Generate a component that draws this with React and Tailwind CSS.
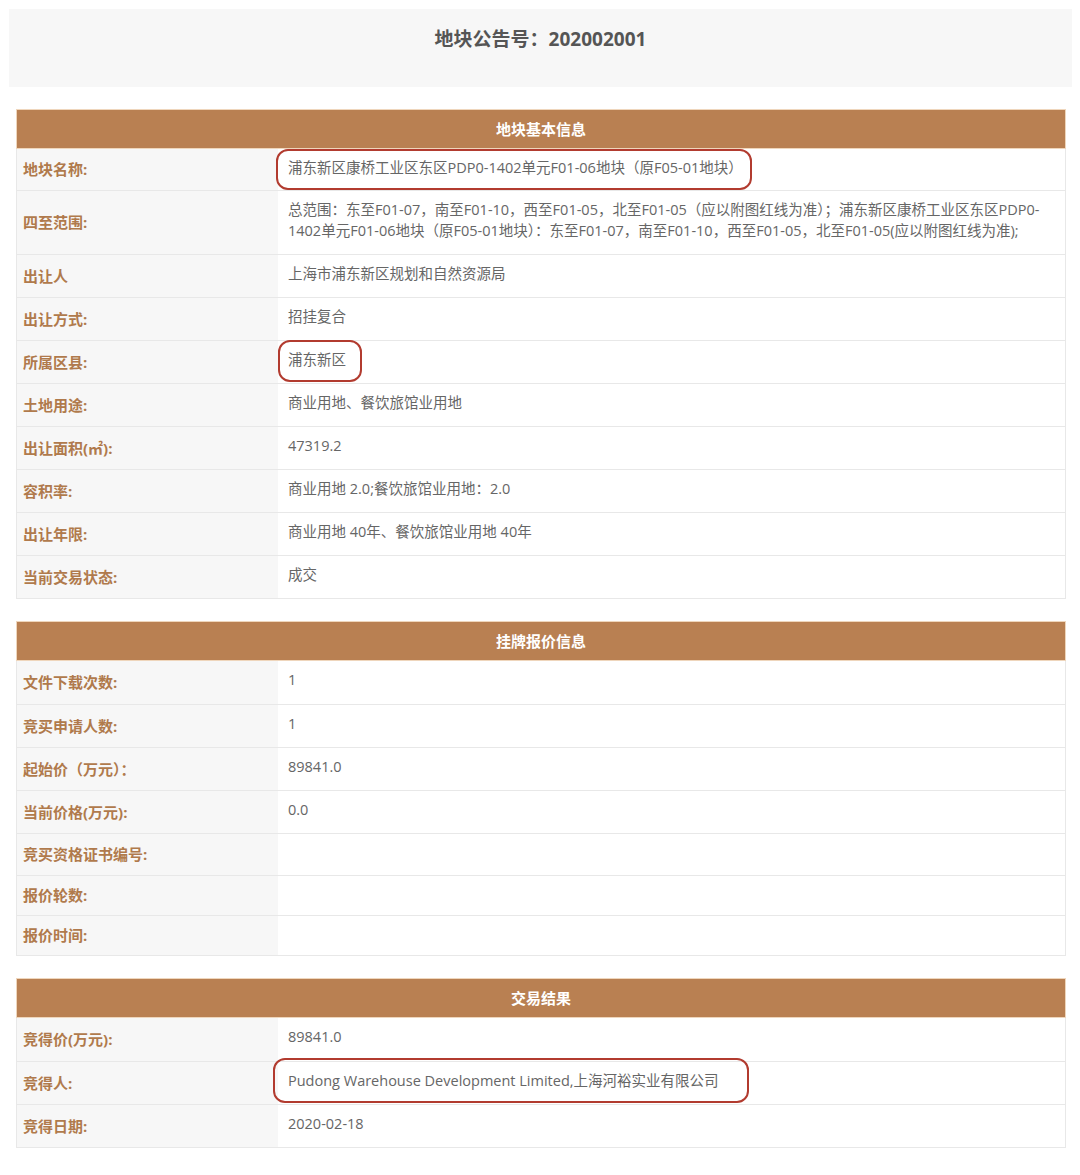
import React from 'react';

const FONT = { fontFamily: '"Open Sans", "Noto Sans CJK SC", sans-serif' };

function Mark({ children, box }) {
  return (
    <span className="relative inline-block">
      {children}
      <span className={`pointer-events-none absolute border-[2.5px] border-[#b23b2f] rounded-[12px] ${box}`} />
    </span>
  );
}

function Row({ label, children, h = 'min-h-[43px]' }) {
  return (
    <div className={`flex border-t border-[#e8e8e8] ${h}`}>
      <div className="w-[261px] shrink-0 bg-[#f7f7f7] flex items-center pl-[6px] text-[15px] font-bold text-[#b07a4c]">
        {label}
      </div>
      <div className="flex-1 bg-white pl-[10px] pr-[12px] pt-[8px] pb-[11px] text-[14.5px] leading-[21px] text-[#666]">
        {children}
      </div>
    </div>
  );
}

function Section({ title, children }) {
  return (
    <div className="mx-[16px] w-[1050px] mt-[22px]">
      <div className="h-[40px] bg-[#b98052] border border-[#efd6bc] flex items-center justify-center text-[15px] font-bold text-white">
        {title}
      </div>
      <div className="border-x border-b border-[#e8e8e8]">{children}</div>
    </div>
  );
}

export default function App() {
  return (
    <div className="w-[1080px] min-h-[1175px] bg-white pt-[9px]" style={FONT}>
      <div className="mx-[9px] w-[1063px] h-[78px] bg-[#f7f7f7] flex justify-center pt-[17px]">
        <h1 className="text-[19px] font-bold text-[#555] leading-[26px]">地块公告号：202002001</h1>
      </div>

      <Section title="地块基本信息">
        <Row label="地块名称:" h="min-h-[41px] !border-t-0">
          <Mark box="-left-[12px] -right-[9px] -top-[8px] -bottom-[12px]">
            浦东新区康桥工业区东区PDP0-1402单元F01-06地块（原F05-01地块）
          </Mark>
        </Row>
        <Row label="四至范围:" h="min-h-[64px]">
          总范围：东至F01-07，南至F01-10，西至F01-05，北至F01-05（应以附图红线为准）；浦东新区康桥工业区东区PDP0-
          <br />
          1402单元F01-06地块（原F05-01地块）：东至F01-07，南至F01-10，西至F01-05，北至F01-05(应以附图红线为准);
        </Row>
        <Row label="出让人">上海市浦东新区规划和自然资源局</Row>
        <Row label="出让方式:">招挂复合</Row>
        <Row label="所属区县:">
          <Mark box="-left-[10px] -right-[16px] -top-[9px] -bottom-[12px]">浦东新区</Mark>
        </Row>
        <Row label="土地用途:">商业用地、餐饮旅馆业用地</Row>
        <Row label="出让面积(㎡):">47319.2</Row>
        <Row label="容积率:">商业用地 2.0;餐饮旅馆业用地：2.0</Row>
        <Row label="出让年限:">商业用地 40年、餐饮旅馆业用地 40年</Row>
        <Row label="当前交易状态:">成交</Row>
      </Section>

      <Section title="挂牌报价信息">
        <Row label="文件下载次数:" h="min-h-[43px] !border-t-0">1</Row>
        <Row label="竞买申请人数:">1</Row>
        <Row label="起始价（万元）：">89841.0</Row>
        <Row label="当前价格(万元):">0.0</Row>
        <Row label="竞买资格证书编号:" h="h-[42px]"></Row>
        <Row label="报价轮数:" h="h-[40px]"></Row>
        <Row label="报价时间:" h="h-[40px]"></Row>
      </Section>

      <Section title="交易结果">
        <Row label="竞得价(万元):" h="min-h-[43px] !border-t-0">89841.0</Row>
        <Row label="竞得人:">
          <Mark box="-left-[15px] -right-[30px] -top-[12px] -bottom-[12px]">
            Pudong Warehouse Development Limited,上海河裕实业有限公司
          </Mark>
        </Row>
        <Row label="竞得日期:">2020-02-18</Row>
      </Section>
    </div>
  );
}
